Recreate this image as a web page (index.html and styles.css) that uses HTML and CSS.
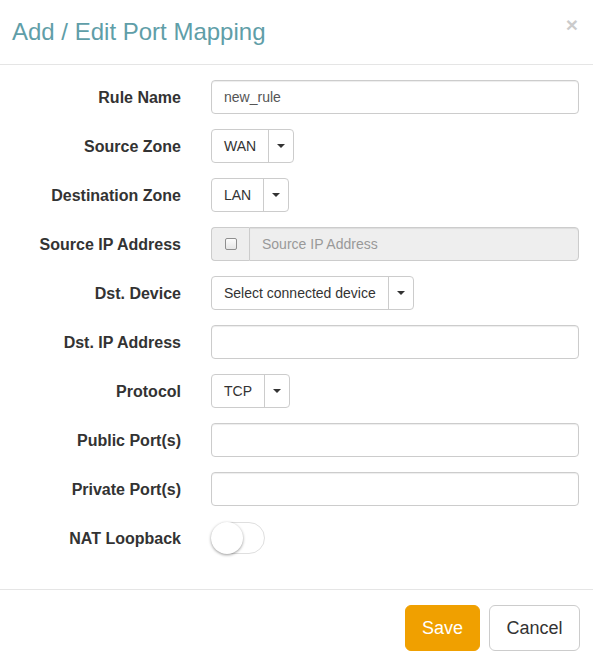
FILE: index.html
```html
<!DOCTYPE html>
<html>
<head>
<meta charset="utf-8">
<link rel="stylesheet" href="styles.css">
</head>
<body>
<div class="modal">
  <div class="modal-header">
    <h4 class="modal-title">Add / Edit Port Mapping</h4>
    <button class="close" type="button">×</button>
  </div>
  <div class="modal-body">
    <form class="form">
      <div class="form-group">
        <label class="label">Rule Name</label>
        <div class="field"><input class="input" type="text" value="new_rule"></div>
      </div>
      <div class="form-group">
        <label class="label">Source Zone</label>
        <div class="field">
          <div class="btn-group"><span class="btn-main">WAN</span><span class="btn-caret"><span class="caret"></span></span></div>
        </div>
      </div>
      <div class="form-group">
        <label class="label">Destination Zone</label>
        <div class="field">
          <div class="btn-group"><span class="btn-main">LAN</span><span class="btn-caret"><span class="caret"></span></span></div>
        </div>
      </div>
      <div class="form-group">
        <label class="label">Source IP Address</label>
        <div class="field">
          <div class="input-group">
            <span class="addon"><span class="checkbox"></span></span>
            <input class="input input-disabled" type="text" placeholder="Source IP Address" disabled>
          </div>
        </div>
      </div>
      <div class="form-group">
        <label class="label">Dst. Device</label>
        <div class="field">
          <div class="btn-group"><span class="btn-main">Select connected device</span><span class="btn-caret"><span class="caret"></span></span></div>
        </div>
      </div>
      <div class="form-group">
        <label class="label">Dst. IP Address</label>
        <div class="field"><input class="input" type="text"></div>
      </div>
      <div class="form-group">
        <label class="label">Protocol</label>
        <div class="field">
          <div class="btn-group"><span class="btn-main">TCP</span><span class="btn-caret"><span class="caret"></span></span></div>
        </div>
      </div>
      <div class="form-group">
        <label class="label">Public Port(s)</label>
        <div class="field"><input class="input" type="text"></div>
      </div>
      <div class="form-group">
        <label class="label">Private Port(s)</label>
        <div class="field"><input class="input" type="text"></div>
      </div>
      <div class="form-group">
        <label class="label">NAT Loopback</label>
        <div class="field">
          <span class="switch"><span class="knob"></span></span>
        </div>
      </div>
    </form>
  </div>
  <div class="modal-footer">
    <button class="btn btn-save" type="button">Save</button>
    <button class="btn btn-cancel" type="button">Cancel</button>
  </div>
</div>
</body>
</html>
```
FILE: styles.css
```css
* { box-sizing: border-box; }
html, body { margin: 0; padding: 0; background: #fff; }
body {
  font-family: "Liberation Sans", Arial, sans-serif;
  font-size: 14px;
  color: #333;
}
.modal {
  width: 593px;
  height: 666px;
  background: #fff;
  display: flex;
  flex-direction: column;
}
.modal-header {
  height: 65px;
  border-bottom: 1px solid #e5e5e5;
  padding: 0 15px 0 12px;
  display: flex;
  align-items: flex-start;
  justify-content: space-between;
}
.modal-title {
  margin: 18px 0 0;
  font-size: 24px;
  font-weight: normal;
  line-height: 28px;
  color: #5f9ea8;
}
.close {
  margin-top: 14px;
  border: 0;
  background: none;
  padding: 0;
  font-family: "Liberation Sans", Arial, sans-serif;
  font-size: 21px;
  font-weight: bold;
  line-height: 1;
  color: #000;
  opacity: 0.2;
}
.modal-body {
  padding: 15px 14px 4px 0;
  flex: 1;
}
.form { margin: 0; }
.form-group {
  display: flex;
  align-items: center;
  height: 34px;
  margin-bottom: 15px;
}
.label {
  width: 197px;
  padding-right: 16px;
  padding-top: 2px;
  text-align: right;
  font-weight: bold;
  font-size: 16px;
  color: #333;
}
.field {
  flex: 1;
  padding-left: 14px;
}
.input {
  display: block;
  width: 100%;
  height: 34px;
  padding: 6px 12px;
  font-family: "Liberation Sans", Arial, sans-serif;
  font-size: 14px;
  color: #555;
  background: #fff;
  border: 1px solid #ccc;
  border-radius: 4px;
  box-shadow: inset 0 1px 1px rgba(0,0,0,.075);
}
.input::placeholder { color: #999; }
.input-group {
  display: flex;
  height: 34px;
}
.addon {
  width: 38px;
  height: 34px;
  display: flex;
  align-items: center;
  justify-content: center;
  background: #eee;
  border: 1px solid #ccc;
  border-right: 0;
  border-radius: 4px 0 0 4px;
}
.checkbox {
  width: 12px;
  height: 12px;
  border: 1px solid #8f8f8f;
  border-radius: 2px;
  background: linear-gradient(#fcfcfc, #e6e6e6);
  margin-top: -1px;
}
.input-disabled {
  flex: 1;
  background: #eee;
  border-radius: 0 4px 4px 0;
}
.btn-group {
  display: inline-flex;
  height: 34px;
  border: 1px solid #ccc;
  border-radius: 4px;
  background: #fff;
}
.btn-main {
  display: flex;
  align-items: center;
  padding: 0 12px;
  font-size: 14px;
  color: #333;
  border-right: 1px solid #ccc;
}
.btn-caret {
  display: flex;
  align-items: center;
  justify-content: center;
  width: 24px;
}
.caret {
  width: 0;
  height: 0;
  border-top: 4px solid #333;
  border-left: 4px solid transparent;
  border-right: 4px solid transparent;
}
.switch {
  position: relative;
  display: block;
  width: 54px;
  height: 32px;
  border: 1px solid #dfdfdf;
  border-radius: 16px;
  background: #fff;
}
.knob {
  position: absolute;
  left: -1px;
  top: -1px;
  width: 32px;
  height: 32px;
  border-radius: 50%;
  background: #fff;
  box-shadow: 0 1px 3px rgba(0,0,0,.4);
}
.modal-footer {
  border-top: 1px solid #e5e5e5;
  padding: 15px 13px 15px 15px;
  display: flex;
  justify-content: flex-end;
  gap: 9px;
}
.btn {
  height: 46px;
  padding: 0 16px;
  font-family: "Liberation Sans", Arial, sans-serif;
  font-size: 18px;
  border-radius: 6px;
  border: 1px solid;
}
.btn-save {
  width: 75px;
  background: #f0a000;
  border-color: #f0a000;
  color: #fff;
}
.btn-cancel {
  width: 91px;
  background: #fff;
  border-color: #ccc;
  color: #333;
}
```
